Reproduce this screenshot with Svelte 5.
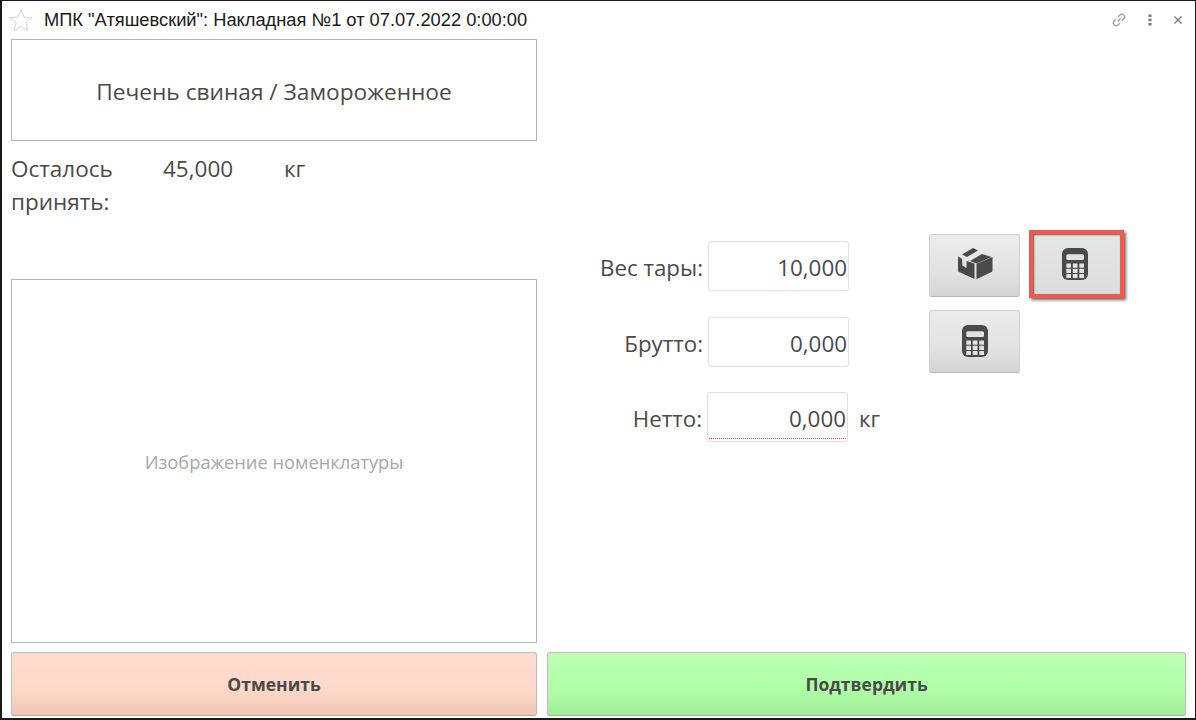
<script lang="ts">
  interface Field {
    label: string;
    value: string;
    unit?: string;
    required?: boolean;
  }

  const fields: Field[] = [
    { label: 'Вес тары:', value: '10,000' },
    { label: 'Брутто:', value: '0,000' },
    { label: 'Нетто:', value: '0,000', unit: 'кг', required: true }
  ];
</script>

<div class="window">
  <header class="title-bar">
    <svg class="star" width="24" height="24" viewBox="0 0 24 24">
      <path d="M12 1.500l3 7.600 8 .6-6.200 5.100 2 7.900-6.800-4.300-6.800 4.300 2-7.900L1 9.700l8-.6z" fill="#fff" stroke="#d4d4d4" stroke-width="1" />
    </svg>
    <span class="title">МПК "Атяшевский": Накладная №1 от 07.07.2022 0:00:00</span>
    <div class="title-actions">
      <svg width="16" height="16" viewBox="0 0 16 16" fill="none" stroke="#9a9a9a" stroke-width="1.300">
        <path d="M6.800 9.200l2.600-2.600" />
        <path d="M7.200 4.800l1.700-1.700a2.700 2.700 0 0 1 3.900 3.900l-1.700 1.700" />
        <path d="M8.800 11.200l-1.700 1.700a2.700 2.700 0 0 1-3.900-3.900l1.700-1.700" />
      </svg>
      <svg width="6" height="16" viewBox="0 0 6 16" fill="#777">
        <rect x="1.500" y="2.500" width="3" height="2.500" />
        <rect x="1.500" y="6.700" width="3" height="2.500" />
        <rect x="1.500" y="11" width="3" height="2.500" />
      </svg>
      <svg width="10" height="10" viewBox="0 0 10 10" stroke="#808080" stroke-width="1.500">
        <path d="M1.500 1.500l7 7M8.500 1.500l-7 7" />
      </svg>
    </div>
  </header>

  <main class="content">
    <section class="left">
      <div class="product">Печень свиная / Замороженное</div>
      <div class="remaining">
        <span class="remaining-label">Осталось принять:</span>
        <span class="remaining-value">45,000</span>
        <span class="remaining-unit">кг</span>
      </div>
      <div class="picture">Изображение номенклатуры</div>
      <button class="action cancel">Отменить</button>
    </section>

    <section class="right">
      <div class="form">
        {#each fields as field, i}
          <div class="row" class:last={field.required}>
            <span class="label">{field.label}</span>
            <div class="input" class:required={field.required}>{field.value}</div>
            {#if field.unit}
              <span class="unit">{field.unit}</span>
            {/if}
            {#if i === 0}
              <button class="tool" aria-label="Тара">
                <svg width="50" height="42" viewBox="0 0 50 42" fill="#4a4a4a">
                  <path d="M12 10.500l11-6.500 5 2.500-11 6.500z" />
                  <path d="M20 17l12-7 9.500 3-15 6.500z" />
                  <path d="M8 12.500l4 2.300.5 7 4 2.200v-7l8 2.500V35L8 27.500z" />
                  <path d="M26.500 19.800l16-6.800v14.500l-16 7.800z" />
                </svg>
              </button>
            {/if}
            {#if i === 0 || i === 1}
              <button class="tool" class:marked={i === 0} aria-label="Калькулятор">
                <svg width="26" height="32" viewBox="0 0 26 32">
                  <rect width="26" height="32" rx="6" fill="#4a4a4a" />
                  <rect x="4.300" y="6.300" width="17.700" height="5.700" rx="1.500" fill="#e2e2e2" />
                  {#each [15.500, 20.700, 25.900] as y}
                    {#each [4.300, 10.800, 17.300] as x}
                      <rect {x} {y} width="4.700" height="4.200" rx="0.500" fill="#e2e2e2" />
                    {/each}
                  {/each}
                </svg>
              </button>
            {/if}
          </div>
        {/each}
      </div>
      <button class="action confirm">Подтвердить</button>
    </section>
  </main>
</div>

<style>
  :global(body) {
    margin: 0;
    background: #fff;
  }

  .window {
    box-sizing: border-box;
    width: 1196px;
    height: 720px;
    border: 1px solid #1a1a1a;
    border-width: 1px 1px 2px 2px;
    display: flex;
    flex-direction: column;
    font-family: "Open Sans", sans-serif;
    color: #4a4a4a;
    overflow: hidden;
  }

  .title-bar {
    height: 38px;
    flex-shrink: 0;
    display: flex;
    align-items: center;
    padding: 0 12px 0 7px;
    box-sizing: border-box;
  }

  .star {
    margin-right: 11px;
  }

  .title {
    font-family: "Liberation Sans", sans-serif;
    font-size: 18.3px;
    color: #1a1a1a;
    white-space: nowrap;
  }

  .title-actions {
    margin-left: auto;
    display: flex;
    align-items: center;
    gap: 20px;
  }

  .content {
    flex: 1;
    display: flex;
    gap: 10px;
    padding: 0 9px 2px 9px;
    min-height: 0;
  }

  .left {
    width: 526px;
    flex-shrink: 0;
    display: flex;
    flex-direction: column;
  }

  .product {
    box-sizing: border-box;
    height: 102px;
    padding-top: 2px;
    border: 1px solid #b4b4b4;
    display: flex;
    align-items: center;
    justify-content: center;
    font-size: 22.7px;
    color: #4a4a4a;
  }

  .remaining {
    height: 138px;
    box-sizing: border-box;
    padding-top: 11px;
    display: flex;
    align-items: flex-start;
    font-size: 22.5px;
    line-height: 33px;
  }

  .remaining-label {
    width: 152px;
    padding-right: 36px;
    box-sizing: border-box;
  }

  .remaining-value {
    width: 121px;
  }

  .picture {
    box-sizing: border-box;
    height: 364px;
    border: 1px solid #b4b4b4;
    display: flex;
    align-items: center;
    justify-content: center;
    font-size: 18.3px;
    color: #a8a8a8;
  }

  .action {
    margin-top: 9px;
    height: 64px;
    box-sizing: border-box;
    border: 1px solid #bdbdbd;
    border-bottom-color: #a8a8a8;
    border-radius: 3px;
    font-family: "Open Sans", sans-serif;
    font-size: 17.5px;
    font-weight: 700;
    color: #4a4a4a;
    flex-shrink: 0;
  }

  .cancel {
    background: linear-gradient(#ffdccf, #ffd8c8 60%, #eec5b3);
  }

  .confirm {
    background: linear-gradient(#bcffb4, #afffa6 60%, #a0ec98);
  }

  .right {
    flex: 1;
    display: flex;
    flex-direction: column;
    min-width: 0;
  }

  .form {
    height: 604px;
    box-sizing: border-box;
    padding: 202px 0 0 0;
    display: flex;
    flex-direction: column;
    gap: 26px;
  }

  .row {
    height: 50px;
    display: flex;
    align-items: center;
    position: relative;
    font-size: 22.3px;
  }

  .row.last {
    margin-top: -1px;
    margin-left: -1px;
  }

  .label {
    width: 156px;
    text-align: right;
    margin-right: 5px;
    padding-top: 2px;
    white-space: nowrap;
  }

  .input {
    box-sizing: border-box;
    width: 141px;
    height: 50px;
    padding-top: 2px;
    border: 1px solid #dedede;
    border-radius: 3px;
    display: flex;
    align-items: center;
    justify-content: flex-end;
    padding-right: 1px;
    font-size: 22.4px;
    background: #fff;
  }

  .input.required {
    position: relative;
  }

  .input.required::after {
    content: "";
    position: absolute;
    left: 1px;
    right: 1px;
    bottom: 2px;
    border-bottom: 1px dotted #e23b3b;
  }

  .unit {
    margin-left: 11px;
    padding-top: 2px;
  }

  .tool {
    box-sizing: border-box;
    width: 91px;
    height: 63px;
    margin-top: -2px;
    margin-left: 80px;
    border: 1px solid #cfcfcf;
    border-bottom-color: #b5b5b5;
    border-radius: 3px;
    background: linear-gradient(#ececec, #e2e2e2 60%, #d4d4d4);
    display: flex;
    align-items: center;
    justify-content: center;
    padding: 0;
    flex-shrink: 0;
  }

  .tool + .tool {
    margin-left: 9px;
  }

  .tool.marked {
    width: 95px;
    height: 68px;
    margin-top: -5px;
    padding-right: 4px;
    border: 4px solid #f4584a;
    box-shadow: 2px 2px 3px rgba(0, 0, 0, 0.6), inset 1px 1px 2px rgba(0, 0, 0, 0.6);
    border-radius: 0;
    background: linear-gradient(#e6e6e6, #dcdcdc);
  }
</style>
